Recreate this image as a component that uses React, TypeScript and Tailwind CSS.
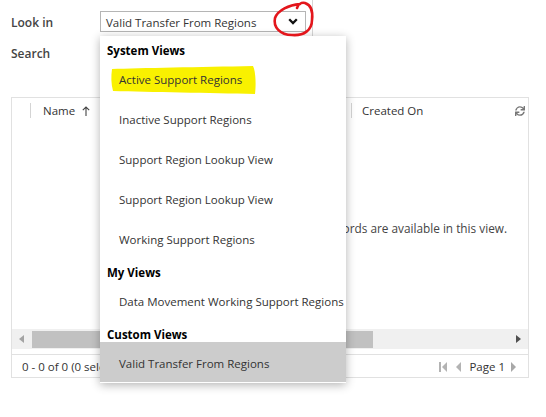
import { FaSync } from "react-icons/fa";

function Header({ children, first }: { children: string; first?: boolean }) {
  return (
    <div className={`h-[22px] pl-[7px] ${first ? "pt-[6px]" : "pt-[6px]"} leading-[17px] font-bold text-black`}>
      {children}
    </div>
  );
}

function Item({ children, selected, highlight }: { children: string; selected?: boolean; highlight?: boolean }) {
  return (
    <div className={`relative h-[40px] flex items-center pl-[19px] pt-[3px] ${selected ? "bg-[#cccccc]" : ""}`}>
      {highlight && (
        <svg className="absolute left-0 top-0" width="170" height="40" viewBox="0 0 170 40">
          <path d="M12 11 C40 10 100 9 153 8 C156 14 156 28 155 36 C110 35 50 34 13 33 C11 26 11 18 12 11 Z" fill="#f9f100" />
        </svg>
      )}
      <span className="relative">{children}</span>
    </div>
  );
}

export default function App() {
  return (
    <div className="relative w-[546px] h-[417px] overflow-hidden bg-white font-['Open_Sans',sans-serif] text-[11.5px] text-[#333]">
      <div className="flex flex-col pl-[11px]">
        <div className="h-[40px] w-[302px] border-r border-[#d6d6d6] pt-[11px] flex items-start">
          <div className="w-[89px] leading-[21px] pt-[1px] font-semibold text-[12px] text-[#444]">Look in</div>
          <div className="w-[206px] h-[21px] border border-[#b5b5b5] flex items-center justify-between pl-[5px] pr-[7px]">
            <span className="leading-[19px] pt-[2px]">Valid Transfer From Regions</span>
            <svg width="10" height="7" viewBox="0 0 10 7">
              <path d="M1.2 1.2 L5 5 L8.8 1.2" stroke="#111" strokeWidth="2.3" fill="none" />
            </svg>
          </div>
        </div>
        <div className="mt-[3px] h-[20px] flex items-center">
          <div className="w-[89px] leading-[20px] pt-[2px] font-semibold text-[12px] text-[#444]">Search</div>
          <div className="w-[230px] h-[20px] border border-[#c8c8c8]" />
        </div>

        <div className="mt-[34px] w-[518px] h-[281px] border border-[#e1e1e1] flex flex-col">
          <div className="h-[25px] flex items-center">
            <div className="w-[339px] flex items-center pl-[18px]">
              <div className="w-px h-[15px] bg-[#d4d4d4]" />
              <span className="ml-[12px]">Name</span>
              <svg className="ml-[7px]" width="8" height="10" viewBox="0 0 8 10">
                <path d="M4 10 V1 M0.8 4.2 L4 1 L7.2 4.2" stroke="#444" strokeWidth="1.1" fill="none" />
              </svg>
            </div>
            <div className="w-px h-[15px] bg-[#d4d4d4]" />
            <span className="ml-[10px]">Created On</span>
            <div className="ml-auto pr-[3px] flex items-center">
              <FaSync size={10} color="#777" />
            </div>
          </div>
          <div className="flex-1 flex justify-end pr-[21px] pt-[97px]">
            <span className="leading-[16px] text-[11.8px] text-[#444]">No records are available in this view.</span>
          </div>
          <div className="h-[20px] bg-[#f0f0f0] flex items-center pl-[7px] pr-[7px]">
            <svg width="5" height="8" viewBox="0 0 5 8">
              <path d="M5 0 L0 4 L5 8 Z" fill="#a3a3a3" />
            </svg>
            <div className="ml-[8px] w-[341px] h-[17px] bg-[#c1c1c1]" />
            <svg className="ml-auto" width="5" height="8" viewBox="0 0 5 8">
              <path d="M0 0 L5 4 L0 8 Z" fill="#4f4f4f" />
            </svg>
          </div>
          <div className="h-[5px]" />
          <div className="h-[23px] border-t border-[#e1e1e1] flex items-center pl-[10px] pr-[11px] pt-[1px]">
            <span>0 - 0 of 0 (0 selected)</span>
            <div className="ml-auto flex items-center">
              <svg width="8" height="10" viewBox="0 0 8 10">
                <rect x="0" y="0" width="2" height="10" fill="#b3b3b3" />
                <path d="M8 0 L3 5 L8 10 Z" fill="#b3b3b3" />
              </svg>
              <svg className="ml-[8px]" width="6" height="10" viewBox="0 0 6 10">
                <path d="M6 0 L1 5 L6 10 Z" fill="#b3b3b3" />
              </svg>
              <span className="ml-[8px]">Page 1</span>
              <svg className="ml-[6px]" width="6" height="10" viewBox="0 0 6 10">
                <path d="M0 0 L5 5 L0 10 Z" fill="#a8a8a8" />
              </svg>
            </div>
          </div>
        </div>
      </div>

      <div className="absolute left-[100px] top-[36px] w-[246px] h-[347px] bg-white shadow-[0_2px_9px_rgba(0,0,0,0.3)] flex flex-col">
        <Header first>System Views</Header>
        <Item highlight>Active Support Regions</Item>
        <Item>Inactive Support Regions</Item>
        <Item>Support Region Lookup View</Item>
        <Item>Support Region Lookup View</Item>
        <Item>Working Support Regions</Item>
        <Header>My Views</Header>
        <Item>Data Movement Working Support Regions</Item>
        <Header>Custom Views</Header>
        <Item selected>Valid Transfer From Regions</Item>
      </div>

      <svg className="absolute left-0 top-0 pointer-events-none" width="546" height="60" viewBox="0 0 546 60">
        <path
          d="M300 4 C289 5 278 10 275 18 C273 27 280 35 292 35 C304 36 312 30 312 20 C313 12 311 5 305 3 C301 2 298 5 297 8"
          stroke="#e3161c"
          strokeWidth="2.6"
          fill="none"
          strokeLinecap="round"
        />
      </svg>
    </div>
  );
}
